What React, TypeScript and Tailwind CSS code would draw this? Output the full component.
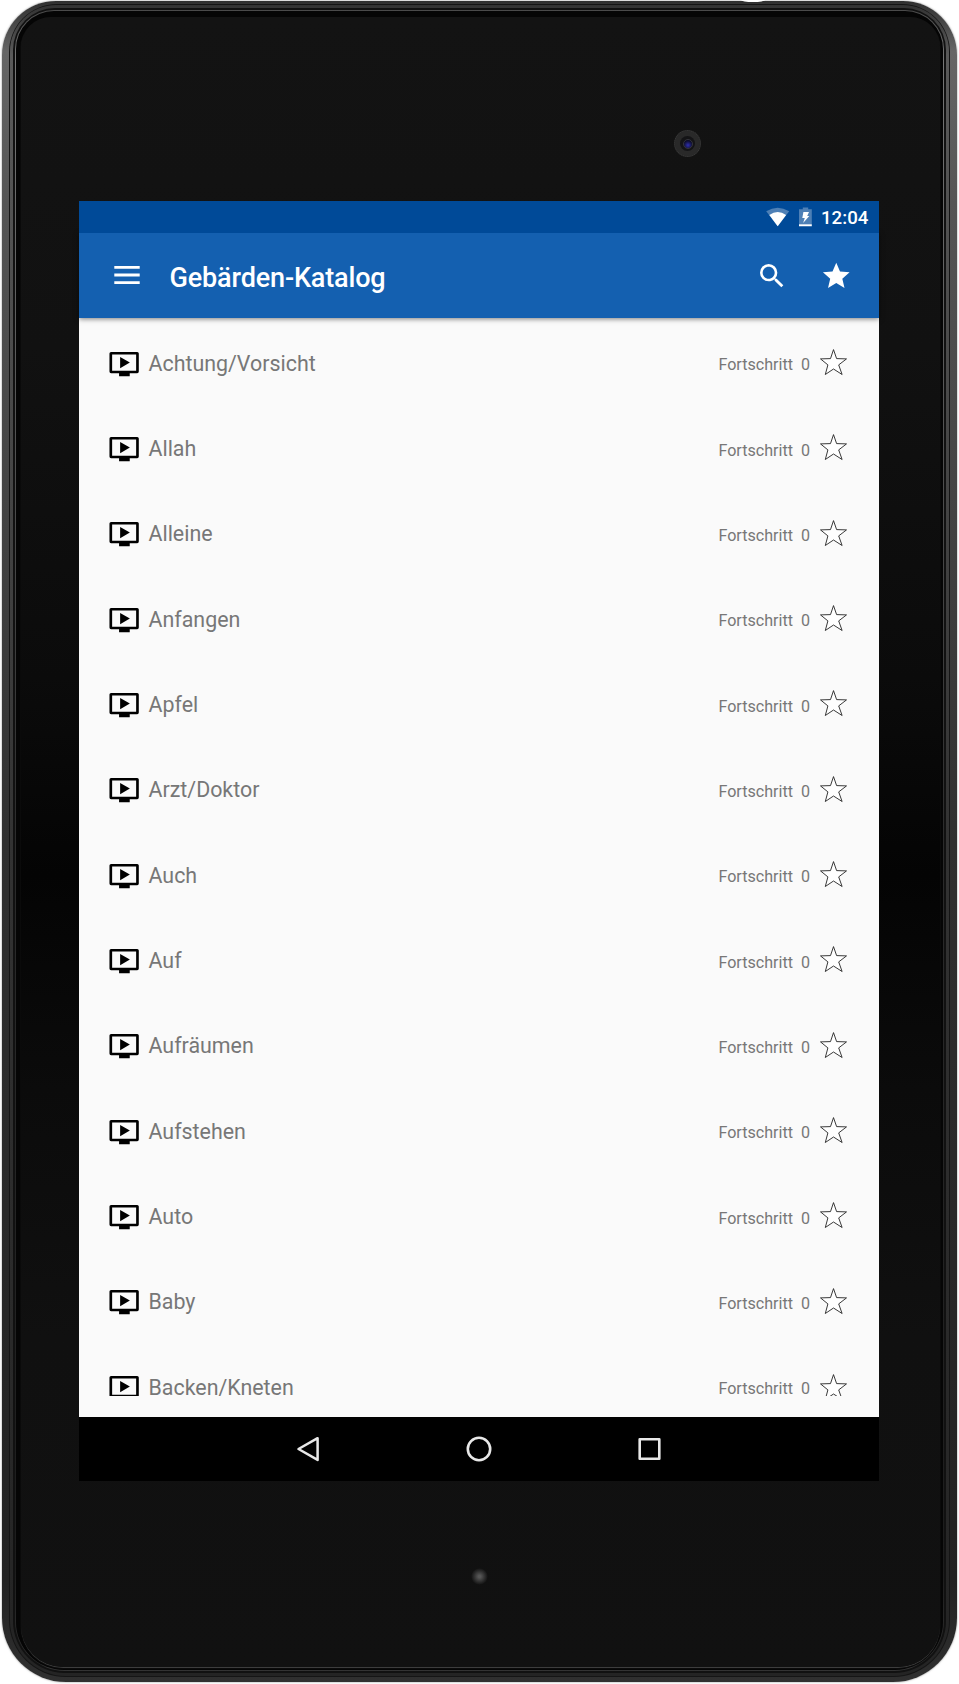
import React from "react";

const entries = [
  "Achtung/Vorsicht",
  "Allah",
  "Alleine",
  "Anfangen",
  "Apfel",
  "Arzt/Doktor",
  "Auch",
  "Auf",
  "Aufräumen",
  "Aufstehen",
  "Auto",
  "Baby",
  "Backen/Kneten",
];

function VideoIcon() {
  return (
    <svg className="h-8 w-8 shrink-0" viewBox="0 0 24 24" fill="#000">
      <path
        fillRule="evenodd"
        d="M2.300 3h19.600Q23.100 3 23.100 4.200v13.500Q23.100 19 21.900 19H16.300v2.100H8.300V19H2.300Q1.100 19 1.100 17.700V4.200Q1.100 3 2.300 3zM3.100 4.900v12.100h18V4.900zM9.100 6.700v8.500l7.300-4.250z"
      />
    </svg>
  );
}

function StarOutline() {
  return (
    <svg className="h-7 w-7 shrink-0" viewBox="-0.500 0 28 28" fill="#fff" stroke="#222" strokeWidth="0.9">
      <path d="M14 1.600L17.100 10.600L27 10.900L19.200 16.900L22.600 26.500L14 21L5.800 26.500L8.400 16.900L1 10.900L11 10.600Z" />
    </svg>
  );
}

function StatusBar() {
  return (
    <div className="relative z-20 flex h-8 items-center justify-end bg-[#004a98] pr-[11px] text-white">
      <svg className="h-5 w-6" viewBox="0.300 0 24 20">
        <path d="M.5 4.300Q12-3 23.500 4.300L12 19.200z" fill="#4e80b6" />
        <path d="M3.600 8.100Q12 2 20.400 8.100L12 19.200z" fill="#fff" />
      </svg>
      <svg className="ml-[8px] h-5 w-[14px]" viewBox="-0.500 0 14 20">
        <path d="M4.300.5h5.400v1.700H13.300v15H.5v-15h3.800z" fill="#4e80b6" />
        <path d="M.5 17.200h12.800v2.100H.5zM4.900 5h5.600L8.700 9h2.100l-6.200 7 1.700-5H3.800z" fill="#fff" />
      </svg>
      <span className="ml-[9.500px] w-[47px] pt-[2px] text-right text-[18.670px] leading-[22px] font-medium whitespace-nowrap">
        12:04
      </span>
    </div>
  );
}

function Toolbar() {
  return (
    <div className="relative z-10 flex h-[85px] shrink-0 items-center bg-[#1460b0] pr-[27px] pl-[35px] text-white shadow-[0_1px_5px_rgba(0,0,0,0.5)]">
      <svg className="mb-[2px] h-[18px] w-[26px]" viewBox="0 0 26 18" fill="#fff">
        <path d="M.3 0h25.400v2.800H.3zM.3 7.600h25.400v2.800H.3zM.3 15.200h25.400V18H.3z" />
      </svg>
      <h1 className="ml-[29.500px] pt-[5px] text-[27px] leading-8 font-medium tracking-[-0.150px]">Gebärden-Katalog</h1>
      <svg className="ml-auto h-8 w-8" viewBox="0 0 24 24" fill="#fff">
        <path d="M15.500 14h-.79l-.28-.27A6.471 6.471 0 0 0 16 9.500 6.500 6.500 0 1 0 9.500 16c1.610 0 3.090-.59 4.230-1.570l.27.28v.79l5 4.990L20.490 19l-4.990-5zm-6 0C7.010 14 5 11.990 5 9.500S7.010 5 9.500 5 14 7.010 14 9.500 11.990 14 9.500 14z" />
      </svg>
      <svg className="ml-8 h-8 w-8" viewBox="0 0 24 24" fill="#fff">
        <path d="M12.200 17.270L18.380 21l-1.640-7.030L22.200 9.240l-7.190-.61L12.200 2 9.390 8.630 2.200 9.240l5.460 4.730L6.020 21z" />
      </svg>
    </div>
  );
}

function Row({ name }: { name: string }) {
  return (
    <li className="group flex h-[85.333px] items-center pr-8 pl-[29px] text-[#777]">
      <div className="h-8 w-8 shrink-0 overflow-hidden group-last:mb-2 group-last:h-6">
        <VideoIcon />
      </div>
      <span className="ml-[8.500px] text-[21.400px] leading-7">{name}</span>
      <span className="ml-auto pt-[3.500px] text-[16.100px] leading-6">Fortschritt</span>
      <span className="mr-[9px] ml-2 pt-[3.500px] text-[16.100px] leading-6">0</span>
      <div className="mb-[3px] h-7 w-7 shrink-0 overflow-hidden group-last:mb-[7px] group-last:h-[23px]">
        <StarOutline />
      </div>
    </li>
  );
}

function NavBar() {
  return (
    <div className="flex h-16 items-center justify-center gap-[143px] bg-black">
      <svg className="h-7 w-7" viewBox="0 0 28 28" fill="none" stroke="#e8e8e8" strokeWidth="2.500" strokeLinejoin="round">
        <path d="M23.600 3.200v21.700L4.500 14z" />
      </svg>
      <svg className="h-7 w-7" viewBox="0 0 28 28" fill="none" stroke="#e8e8e8" strokeWidth="2.600">
        <circle cx="14" cy="14" r="11.200" />
      </svg>
      <svg className="h-7 w-7" viewBox="0 0 28 28" fill="none" stroke="#e8e8e8" strokeWidth="2.600" strokeLinejoin="round">
        <rect x="3.700" y="4.200" width="19.600" height="19.600" />
      </svg>
    </div>
  );
}

function Camera() {
  return (
    <div className="absolute top-[130px] left-[674px] flex h-[27px] w-[27px] items-center justify-center rounded-full border border-dotted border-[#3a3a3a] bg-[#292929]">
      <div className="flex h-[15px] w-[15px] items-center justify-center rounded-full bg-[#141416]">
        <div className="h-[10px] w-[10px] rounded-full border border-[#34343c] bg-[radial-gradient(circle_at_50%_65%,#2f2fae,#0b0b25_70%)]" />
      </div>
    </div>
  );
}

export default function App() {
  return (
    <div className="relative h-[1684px] w-[959px] overflow-hidden bg-white pt-px pr-[2px] pb-[2px] pl-[2px] font-[Roboto,'Liberation_Sans',sans-serif]">
      <div className="h-full rounded-t-[54px] rounded-b-[64px] bg-[linear-gradient(180deg,#303030,#666_3%,#555_12%,#303030_50%,#222_94%,#303030)] pt-[3px] pr-[7px] pb-[5px] pl-[7px] shadow-[0_0_2px_rgba(0,0,0,0.5)]">
        <div className="h-full rounded-t-[48px] rounded-b-[57px] bg-[#151515] p-px">
          <div className="h-full rounded-t-[46px] rounded-b-[56px] bg-[linear-gradient(180deg,#333,#5a5a5a_3%,#333_50%,#242424)] p-[3px]">
            <div className="h-full rounded-t-[42px] rounded-b-[52px] bg-[#111] p-[2px]">
              <div className="h-full rounded-t-[39px] rounded-b-[50px] bg-[linear-gradient(180deg,#4a4a4a,#777_3%,#2b2b2b_50%,#1c1c1c_94%,#333)] p-px">
                <div className="h-full rounded-t-[38px] rounded-b-[48px] bg-[#050505] pt-[6px] pr-[3px] pb-[3px] pl-[5px]">
                  <div className="h-full rounded-t-[30px] rounded-b-[42px] bg-[linear-gradient(180deg,#131313,#111_20%,#0b0b0b_40%,#040404_52%,#0b0b0b_65%,#101010_80%,#111)] pt-[184px] pl-[58px] shadow-[0_1px_1px_#444]">
                    <main className="flex h-[1280px] w-[800px] flex-col bg-[#fafafa]">
                      <StatusBar />
                      <Toolbar />
                      <ul className="h-[1099px] overflow-hidden pt-[3px]">
                        {entries.map((name) => (
                          <Row key={name} name={name} />
                        ))}
                      </ul>
                      <NavBar />
                    </main>
                  </div>
                </div>
              </div>
            </div>
          </div>
        </div>
      </div>
      <Camera />
      <div className="absolute top-[1568px] left-[471px] h-[17px] w-[17px] rounded-full bg-[radial-gradient(circle,#555_10%,#333_40%,transparent_70%)]" />
      <div className="absolute -top-[2px] left-[741px] h-1 w-6 rounded-[50%] bg-white" />
    </div>
  );
}
